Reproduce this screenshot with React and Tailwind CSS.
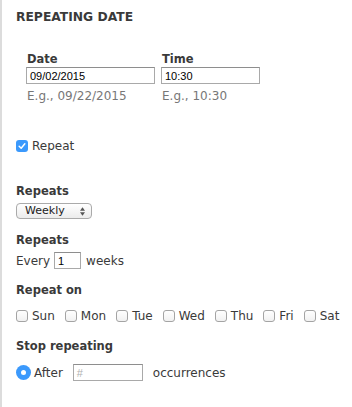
const font = { fontFamily: '"DejaVu Sans", "Liberation Sans", sans-serif' };

function Box({ checked }) {
  if (checked) {
    return (
      <span className="flex h-[12px] w-[12px] shrink-0 items-center justify-center rounded-[3px] bg-[#3b99fc]">
        <svg viewBox="0 0 12 12" className="h-[10px] w-[10px]" fill="none">
          <path d="M2.6 6.3 5 8.6 9.4 3.4" stroke="#fff" strokeWidth="1.8" strokeLinecap="round" strokeLinejoin="round" />
        </svg>
      </span>
    );
  }
  return (
    <span className="block h-[12px] w-[12px] shrink-0 rounded-[3px] border border-[#a4a4a4] bg-gradient-to-b from-white to-[#f1f1f1]" />
  );
}

function Day({ label }) {
  return (
    <div className="flex items-center gap-[4px]">
      <Box />
      <span>{label}</span>
    </div>
  );
}

function Label({ children, className = "" }) {
  return <div className={"text-[11.5px] font-bold leading-4 text-[#3a3a3a] " + className}>{children}</div>;
}

function Field({ value, className = "", placeholder }) {
  return (
    <div
      className={"flex h-[17px] items-center border border-[#a9a9a9] border-t-[#8e8e8e] bg-white pl-[3px] text-[11px] " + className}
      style={{ fontFamily: '"Liberation Sans", Arial, sans-serif' }}
    >
      {value ? <span className="text-black">{value}</span> : <span className="text-[#b0b0b0]">{placeholder}</span>}
    </div>
  );
}

export default function App() {
  return (
    <div className="h-[407px] w-[352px] overflow-hidden border-l-2 border-[#dcdcdc] bg-white pl-[14px] text-[12px] leading-4 text-[#3a3a3a]" style={font}>
      <div className="pt-[9px] text-[12.3px] font-bold leading-4 text-[#3a3a3a]">REPEATING DATE</div>

      <div className="mt-[26px] flex pl-[11px]">
        <div className="w-[135px]">
          <Label>Date</Label>
          <Field value="09/02/2015" className="-ml-px w-[129px]" />
          <div className="mt-[4px] text-[#777]">E.g., 09/22/2015</div>
        </div>
        <div>
          <Label>Time</Label>
          <Field value="10:30" className="-ml-px w-[99px]" />
          <div className="mt-[4px] text-[#777]">E.g., 10:30</div>
        </div>
      </div>

      <div className="mt-[34px] flex items-center gap-[4px]">
        <Box checked />
        <span>Repeat</span>
      </div>

      <Label className="mt-[29px]">Repeats</Label>
      <div className="mt-[4px] flex h-[16px] w-[76px] items-center justify-between rounded-[4px] border border-[#aaa] bg-gradient-to-b from-white to-[#ececec] pl-[8px] pr-[6px] text-[11px] text-[#222]">
        <span>Weekly</span>
        <svg viewBox="0 0 6 10" className="h-[9px] w-[5px]" fill="#555">
          <path d="M3 0 6 4H0Z" />
          <path d="M3 10 6 6H0Z" />
        </svg>
      </div>

      <Label className="mt-[13px]">Repeats</Label>
      <div className="mt-[4px] flex h-[17px] items-center">
        <span>Every</span>
        <Field value="1" className="ml-[4px] w-[27px]" />
        <span className="ml-[5px]">weeks</span>
      </div>

      <Label className="mt-[13px]">Repeat on</Label>
      <div className="mt-[10px] flex items-center gap-[10px]">
        {["Sun", "Mon", "Tue", "Wed", "Thu", "Fri", "Sat"].map((d) => (
          <Day key={d} label={d} />
        ))}
      </div>

      <Label className="mt-[14px]">Stop repeating</Label>
      <div className="mt-[10px] flex h-[17px] items-center">
        <span className="flex h-[15px] w-[15px] items-center justify-center rounded-full bg-[#3b99fc]">
          <span className="h-[5px] w-[5px] rounded-full bg-white" />
        </span>
        <span className="ml-[3px]">After</span>
        <Field placeholder="#" className="ml-[10px] w-[70px]" />
        <span className="ml-[10px]">occurrences</span>
      </div>
    </div>
  );
}
